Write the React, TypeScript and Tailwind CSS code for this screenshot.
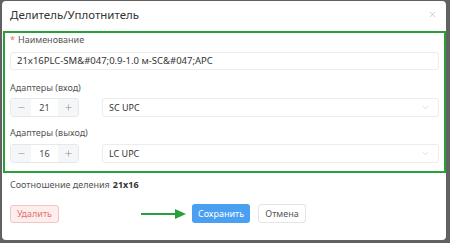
import { Minus, Plus, ChevronDown, X } from 'lucide-react';

function Stepper({ value }: { value: number }) {
  return (
    <div className="flex h-[19px] w-[69px] rounded-[3px] border border-[#e8e8e8] text-[9px] text-[#444]">
      <div className="flex w-[20px] items-center justify-center bg-[#f5f6f8] text-[#888]">
        <Minus className="h-[9px] w-[9px]" strokeWidth={1.5} />
      </div>
      <div className="flex flex-1 items-center justify-center">{value}</div>
      <div className="flex w-[20px] items-center justify-center bg-[#f5f6f8] text-[#888]">
        <Plus className="h-[9px] w-[9px]" strokeWidth={1.5} />
      </div>
    </div>
  );
}

function Select({ value }: { value: string }) {
  return (
    <div className="ml-[23px] flex h-[19px] flex-1 items-center justify-between rounded-[3px] border border-[#ececec] pl-[6px] pr-[8px] text-[9px] text-[#333]">
      <span>{value}</span>
      <ChevronDown className="h-[9px] w-[9px] text-[#c4c4c4]" strokeWidth={1.5} />
    </div>
  );
}

export default function App() {
  return (
    <div
      className="relative h-[243px] w-[450px] overflow-hidden bg-[#616161] pl-[2px] pt-[1px]"
      style={{ fontFamily: '"Noto Sans", "Open Sans", sans-serif' }}
    >
      <div className="h-[239px] w-[444px] rounded-[4px] bg-white">
        {/* Header */}
        <div className="flex h-[27px] items-center justify-between pl-[8px] pr-[9px]">
          <span className="text-[11.5px] text-[#333]">Делитель/Уплотнитель</span>
          <X className="h-[9px] w-[9px] text-[#aaa]" strokeWidth={1.5} />
        </div>

        <div className="px-[8px]">
          <div className="mt-[6px] flex h-[12px] items-center text-[9px] text-[#555]">
            <span className="mr-[3px] text-[#e57373]">*</span>
            Наименование
          </div>
          <div className="mt-[6px] flex h-[18px] w-[429px] items-center rounded-[3px] border border-[#ececec] pl-[6px] text-[9.5px] text-[#333]">
            21x16PLC-SM&amp;#047;0.9-1.0 м-SC&amp;#047;APC
          </div>

          <div className="mt-[12px] flex h-[12px] items-center text-[9px] text-[#555]">Адаптеры (вход)</div>
          <div className="mt-[4px] flex w-[429px] items-center">
            <Stepper value={21} />
            <Select value="SC UPC" />
          </div>

          <div className="mt-[10px] flex h-[12px] items-center text-[9px] text-[#555]">Адаптеры (выход)</div>
          <div className="mt-[5px] flex w-[429px] items-center">
            <Stepper value={16} />
            <Select value="LC UPC" />
          </div>

          <div className="mt-[16px] flex h-[12px] items-center text-[9px] text-[#555]">
            Соотношение деления <span className="ml-[3px] font-bold text-[#333]">21x16</span>
          </div>

          <div className="mt-[13px] flex items-center">
            <div className="flex h-[18px] w-[49px] items-center justify-center rounded-[3px] border border-[#f3c4c4] bg-[#fdeeee] text-[9px] text-[#e57373]">
              Удалить
            </div>
            <svg className="ml-[82px] mr-[6px]" width="45" height="10" viewBox="0 0 45 10">
              <line x1="0" y1="5" x2="36" y2="5" stroke="#2aa03a" strokeWidth="2" />
              <polygon points="34,0 45,5 34,10" fill="#2aa03a" />
            </svg>
            <div className="flex h-[19px] w-[58px] items-center justify-center rounded-[3px] bg-[#4a9ff0] text-[9px] text-white">
              Сохранить
            </div>
            <div className="ml-[8px] flex h-[19px] w-[48px] items-center justify-center rounded-[3px] border border-[#e4e4e4] text-[9px] text-[#555]">
              Отмена
            </div>
          </div>
        </div>
      </div>

      {/* annotation box */}
      <div className="pointer-events-none absolute left-[3px] top-[31px] h-[142px] w-[443px] border-2 border-[#2aa03a]" />
    </div>
  );
}
